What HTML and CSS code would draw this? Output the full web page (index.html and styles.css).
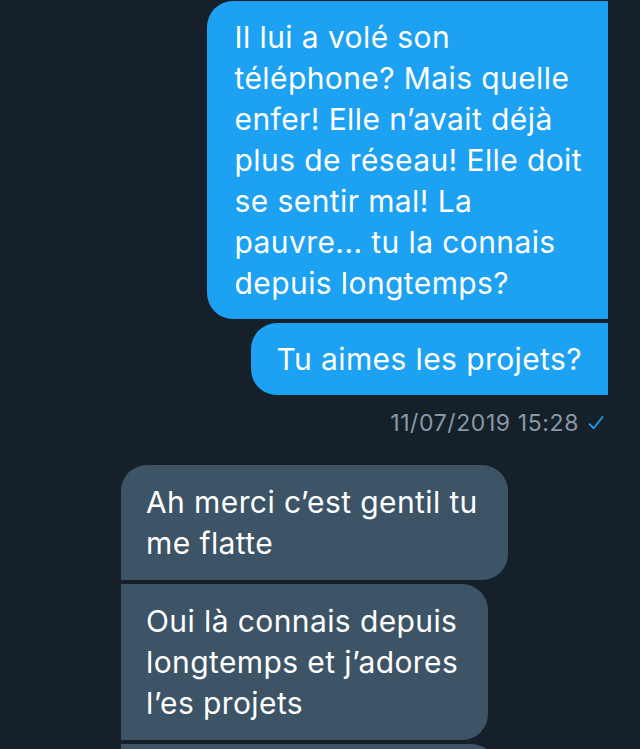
FILE: index.html
```html
<!DOCTYPE html>
<html lang="fr">
<head>
<meta charset="utf-8">
<title>Messages</title>
<link rel="stylesheet" href="styles.css">
</head>
<body>
<main class="thread">
  <section class="group group-sent">
    <div class="bubble sent first">Il lui a volé son<br>téléphone? Mais quelle<br>enfer! Elle n’avait déjà<br>plus de réseau! Elle doit<br>se sentir mal! La<br>pauvre... tu la connais<br>depuis longtemps?</div>
    <div class="bubble sent">Tu aimes les projets?</div>
    <div class="meta">
      <span class="time">11/07/2019 15:28</span>
      <svg class="check" viewBox="0 0 18 18" width="18" height="18" aria-hidden="true"><path d="M2.5 10.2 L6.6 14.2 L15.6 3" fill="none" stroke="#1da1f2" stroke-width="1.8" stroke-linecap="round" stroke-linejoin="round"/></svg>
    </div>
  </section>
  <section class="group group-received">
    <div class="bubble received first">Ah merci c’est gentil tu<br>me flatte</div>
    <div class="bubble received">Oui là connais depuis<br>longtemps et j’adores<br>l’es projets</div>
    <div class="bubble received tail"></div>
  </section>
</main>
</body>
</html>
```
FILE: styles.css
```css
html, body {
  margin: 0;
  padding: 0;
  background: #15202b;
}

body {
  width: 640px;
  height: 749px;
  overflow: hidden;
  font-family: "Inter", "Roboto", "Liberation Sans", sans-serif;
  color: #ffffff;
}

.thread {
  display: flex;
  flex-direction: column;
  padding-top: 1px;
}

.group {
  display: flex;
  flex-direction: column;
  gap: 4px;
}

.group-sent {
  align-items: flex-end;
  padding-right: 32px;
}

.group-received {
  align-items: flex-start;
  padding-left: 121px;
  margin-top: 27px;
}

.bubble {
  font-size: 30px;
  line-height: 41px;
  letter-spacing: 0.4px;
  padding: 16px 26px 15px 25px;
  box-sizing: border-box;
}

.sent {
  background: #1da1f2;
  border-radius: 26px 0 0 26px;
}

.sent.first {
  padding-left: 28px;
}

.received {
  background: #3d5466;
  border-radius: 0 26px 26px 0;
  padding-top: 17px;
  padding-bottom: 16px;
  padding-right: 30px;
}

.received.first {
  border-top-left-radius: 26px;
}

.tail {
  width: 376px;
  height: 60px;
}

.meta {
  display: flex;
  align-items: center;
  gap: 8px;
  margin-top: 9px;
  padding-right: 3px;
  color: #8899a6;
  font-size: 23px;
  line-height: 30px;
  letter-spacing: 0.6px;
}

.check {
  display: block;
}
```
